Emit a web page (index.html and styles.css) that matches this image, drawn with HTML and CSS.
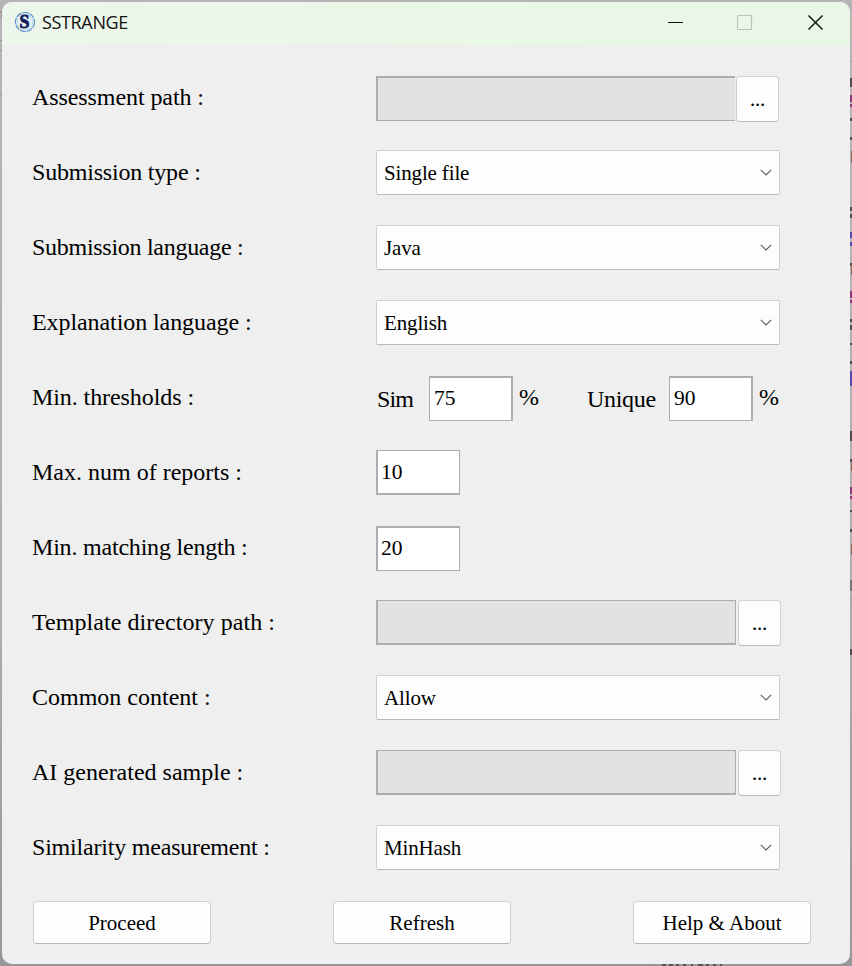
FILE: index.html
```html
<!DOCTYPE html>
<html lang="en">
<head>
<meta charset="utf-8">
<title>SSTRANGE</title>
<link rel="stylesheet" href="styles.css">
</head>
<body>
<svg class="backdrop" width="852" height="966" viewBox="0 0 852 966" aria-hidden="true">
  <path d="M0 40.5H2M0 50.5H2M0 94.5H2M0 947.5H2M850 947.5H852M850 61.5H852M850 598.5H852M850 603.5H852M850 662.5H852" stroke="#959595"/>
  <path d="M0 11l2 2v5" fill="none" stroke="#9a706c"/>
  <g fill="#8e3778"><path d="M850 95h2v7h-2zM850 104h2v3h-2zM850 291h2v7h-2zM850 300h2v3h-2zM850 487h2v7h-2zM850 496h2v3h-2z"/></g>
  <g fill="#554c50"><path d="M850 78h2v9h-2zM850 118h2v3h-2zM850 137h2v3h-2zM850 207h2v4h-2zM850 214h2v4h-2zM850 263h2v3h-2zM850 319h2v3h-2zM850 325h2v5h-2zM850 343h2v2h-2zM850 361h2v3h-2zM850 431h2v10h-2zM850 459h2v3h-2zM850 510h2v2h-2zM850 529h2v3h-2zM850 649h2v6h-2z"/></g>
  <g fill="#8d6959"><path d="M851 151h1v12h-1zM851 265h1v10h-1zM851 461h1v10h-1zM851 544h1v11h-1z"/></g>
  <g fill="#5947b0"><path d="M850 232h2v6h-2zM850 242h2v4h-2zM850 371h2v15h-2z"/></g>
  <path d="M850 580h2v11h-2z" fill="#777"/>
  <path d="M650.5 964v2" stroke="#808080"/>
  <path d="M662 965h4M669 965h4M676 965h3M683 965h3M691 965h2M698 965h5M706 965h3M713 965h3M720 965h2" stroke="#555" stroke-width="2"/>
</svg>
<main class="window">
  <header class="titlebar">
    <svg class="logo" width="22" height="22" viewBox="0 0 22 22" aria-hidden="true">
      <circle cx="11" cy="11" r="9.5" fill="#e6f4f5" stroke="#5b8cc8" stroke-width="1.2" stroke-dasharray="6 1"/>
      <circle cx="11" cy="11" r="7.6" fill="none" stroke="#a5d0dd" stroke-width=".8" stroke-dasharray="3 1"/>
      <text x="10.6" y="17" text-anchor="middle" class="logo-letter">S</text>
    </svg>
    <h1 class="title">SSTRANGE</h1>
    <div class="caption">
      <svg width="16" height="16" viewBox="0 0 16 16"><path d="M0 8.5h15" stroke="#111"/></svg>
      <svg width="16" height="16" viewBox="0 0 16 16"><rect x="-.5" y="1.5" width="14" height="14" rx="1" fill="none" stroke="#b7c6b5" stroke-width="1.2"/></svg>
      <svg width="16" height="16" viewBox="0 0 16 16"><path d="M.5 1.5l14 14M14.5 1.5l-14 14" stroke="#151b15" stroke-width="1.5"/></svg>
    </div>
  </header>
  <form class="form">
    <div class="row low"><span class="label snug">Assessment path :</span><div class="path open"></div><button type="button" class="browse near">...</button></div>
    <div class="row"><span class="label tight">Submission type :</span><div class="select">Single file<svg class="chev" width="12" height="7" viewBox="0 0 12 7"><path d="M.8.8L6 6L11.2.8"/></svg></div></div>
    <div class="row"><span class="label tighter">Submission language :</span><div class="select">Java<svg class="chev" width="12" height="7" viewBox="0 0 12 7"><path d="M.8.8L6 6L11.2.8"/></svg></div></div>
    <div class="row"><span class="label snug">Explanation language :</span><div class="select">English<svg class="chev" width="12" height="7" viewBox="0 0 12 7"><path d="M.8.8L6 6L11.2.8"/></svg></div></div>
    <div class="row low"><span class="label snug">Min. thresholds :</span>
      <div class="thresholds">
        <span class="caption-sim">Sim</span><div class="num right">75</div><span class="pct">%</span>
        <span class="caption-unique">Unique</span><div class="num right">90</div><span class="pct">%</span>
      </div>
    </div>
    <div class="row"><span class="label">Max. num of reports :</span><div class="num bottom">10</div></div>
    <div class="row low"><span class="label tight">Min. matching length :</span><div class="num left">20</div></div>
    <div class="row"><span class="label loose">Template directory path :</span><div class="path"></div><button type="button" class="browse">...</button></div>
    <div class="row"><span class="label">Common content :</span><div class="select">Allow<svg class="chev" width="12" height="7" viewBox="0 0 12 7"><path d="M.8.8L6 6L11.2.8"/></svg></div></div>
    <div class="row"><span class="label">AI generated sample :</span><div class="path"></div><button type="button" class="browse">...</button></div>
    <div class="row"><span class="label tight">Similarity measurement :</span><div class="select">MinHash<svg class="chev" width="12" height="7" viewBox="0 0 12 7"><path d="M.8.8L6 6L11.2.8"/></svg></div></div>
  </form>
  <footer class="actions">
    <button type="button" class="action">Proceed</button>
    <button type="button" class="action">Refresh</button>
    <button type="button" class="action">Help &amp; About</button>
  </footer>
</main>
</body>
</html>
```
FILE: styles.css
```css
* { box-sizing: border-box; }
html { height: 966px; overflow: hidden; background: #c4c4c4; }
body {
  margin: 0; height: 966px; padding: 2px; overflow: hidden;
  background: linear-gradient(#b6b4b6, #afafaf 60%, #989698);
  font-family: "Liberation Serif", "Times New Roman", serif; color: #000;
}
.backdrop { position: absolute; left: 0; top: 0; }
.window {
  position: relative; width: 848px; height: 962px; overflow: hidden;
  display: flex; flex-direction: column;
  background: #efefef; border-radius: 10px;
}
.titlebar {
  flex: none; height: 43px; padding: 0 26px 0 12px; display: flex; align-items: center;
  background: linear-gradient(90deg, #ecf6ea, #e9f8e6 70%);
}
.logo { margin-top: -3px; }
.logo-letter { font: 700 18px "Liberation Serif", serif; fill: #171b5c; stroke: #171b5c; stroke-width: .8px; }
.title { margin: -3px 0 0 6px; font: 400 18px/24px "Open Sans", "Noto Sans", sans-serif; color: #111; letter-spacing: -.35px; }
.caption { margin: -4px 0 0 auto; display: flex; gap: 54px; }
.caption svg { overflow: visible; }
.form { padding-top: 15px; }
.row { height: 75px; padding: 15px 0 0 30px; display: flex; align-items: flex-start; }
.row.low { padding-top: 16px; }
.label { width: 344px; height: 45px; font-size: 24px; line-height: 44px; white-space: nowrap; }
.label.snug { letter-spacing: -.08px; }
.label.tight { letter-spacing: -.2px; }
.label.tighter { letter-spacing: -.28px; }
.label.loose { letter-spacing: .06px; }
.row.low .label { line-height: 42px; }
.path { width: 360px; height: 45px; background: #e2e2e2; border: solid #abadb3; border-width: 1px 1px 2px 2px; }
.path.open { width: 359px; border-width: 2px 0 1px 2px; }
.browse, .action {
  padding: 0; background: #fdfdfd; border: 1px solid #d0d0d0; border-bottom-color: #b9b9b9;
  border-radius: 4px; font: 21px/26px "Liberation Serif", serif; color: #000;
}
.browse { width: 43px; height: 46px; margin-left: 2px; letter-spacing: -.2px; }
.browse.near { margin-left: 1px; }
.select {
  width: 404px; height: 45px; padding: 0 7px; display: flex; align-items: center; justify-content: space-between;
  background: #fdfdfd; border: 1px solid #d0d0d0; border-bottom-color: #b9b9b9; border-radius: 2px;
  font-size: 21px; line-height: 45px; letter-spacing: -.15px;
}
.chev { fill: none; stroke: #606060; stroke-width: 1.2; }
.select { padding-top: 2px; }
.select .chev { margin-top: -2px; }
.num {
  width: 84px; height: 45px; padding-left: 4px; background: #fff;
  border: 1px solid #abadb3; font-size: 21.5px; line-height: 42px;
}
.num.right { border-width: 2px 2px 1px 1px; padding-left: 4px; line-height: 41px; }
.num.bottom { border-width: 1px 1px 2px 2px; padding-left: 3px; }
.num.left { border-width: 2px 1px 1px 2px; padding-left: 3px; line-height: 41px; }
.thresholds { display: flex; font-size: 24px; line-height: 46px; }
.caption-sim { width: 53px; padding-left: 1px; letter-spacing: -.9px; }
.caption-unique { width: 83px; padding-left: 1px; letter-spacing: -.3px; }
.pct { width: 73px; padding-left: 6px; line-height: 42px; }
.pct:last-child { width: 30px; }
.thresholds .num { flex: none; }
.actions { margin-top: 16px; padding: 0 39px 0 31px; display: flex; justify-content: space-between; }
.action { width: 178px; height: 43px; }
```
